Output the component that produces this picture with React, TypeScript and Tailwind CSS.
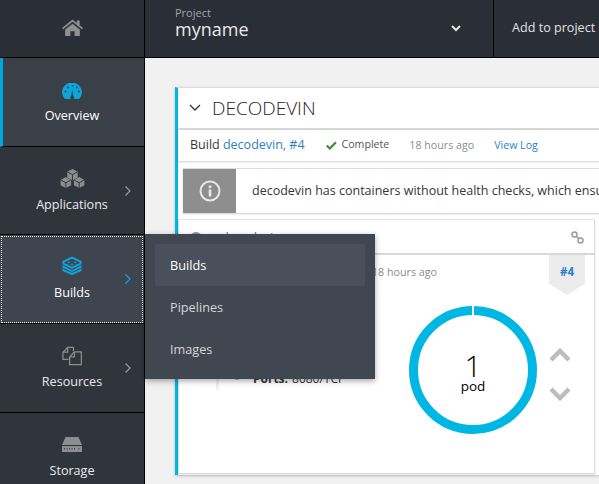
import React from "react";

const Chev = ({ blue }: { blue?: boolean }) => (
  <svg width="8" height="12" viewBox="0 0 8 12" className="absolute left-[124px] top-1/2 -translate-y-1/2" fill="none" stroke={blue ? "#0ea5dc" : "#9a9da1"} strokeWidth="1.2">
    <path d="M1.5 1.5 6 6l-4.5 4.5" />
  </svg>
);

const HomeIcon = () => (
  <svg width="21" height="17" viewBox="0 0 20 18" preserveAspectRatio="none" fill="#8f8f8f">
    <path d="M10 0.5 0 9.6l1.1 1.2L10 3l8.9 7.8 1.1-1.2-3.2-2.9V1.5h-2.7v2.8zM3 11.2V18h5v-5h4v5h5v-6.8L10 5z" />
  </svg>
);

const GaugeIcon = () => (
  <svg width="20" height="16" viewBox="0 0 20 16">
    <path d="M3 16A10 10 0 0 1 0 9.5 10 10 0 0 1 20 9.5 10 10 0 0 1 17 16z" fill="#0ea5dc" />
    <g fill="#343a42">
      <circle cx="3.500" cy="8.500" r="0.900" />
      <circle cx="6" cy="4.500" r="0.900" />
      <circle cx="10.500" cy="3" r="0.900" />
      <circle cx="14.800" cy="4.600" r="0.900" />
      <circle cx="16.800" cy="8.500" r="0.900" />
      <path d="M9.200 13.200 10.200 6.500 11.200 13.200A1.500 1.500 0 0 1 11.200 16H9.200A1.500 1.500 0 0 1 9.200 13.200z" />
    </g>
  </svg>
);

const CubesIcon = () => (
  <svg width="25" height="20" viewBox="0 0 26 21">
    <g fill="#8b8d8f">
      <path d="M7.5 4 13 1l5.5 3v6L13 13 7.5 10z" />
      <path d="M0.5 12.5 6 9.500l5.500 3v5.500L6 21l-5.500-3z" />
      <path d="M14.500 12.500 20 9.500l5.500 3v5.500L20 21l-5.500-3z" />
    </g>
    <g fill="none" stroke="#30353d" strokeWidth="1">
      <path d="M7.500 4 13 7l5.500-3M13 7v6" />
      <path d="M0.500 12.500 6 15.500l5.500-3M6 15.500V21" />
      <path d="M14.500 12.500 20 15.500l5.500-3M20 15.500V21" />
    </g>
  </svg>
);

const BuildsIcon = () => (
  <svg width="20" height="19" viewBox="0 0 21 19">
    <g fill="none" stroke="#0ea5dc" strokeWidth="2">
      <path d="M10.500 1.200 19.500 5.500v2L10.500 11.800 1.500 7.500v-2z" />
      <path d="M1.500 9.500v1.500l9 4.300 9-4.300V9.500" />
      <path d="M1.500 13v1.500l9 3.800 9-3.800V13" />
    </g>
    <g fill="#0ea5dc">
      <circle cx="7" cy="6" r="1" />
      <circle cx="14" cy="6" r="1" />
      <path d="M9 7.600h3v1.100H9z" />
    </g>
  </svg>
);

const ResourcesIcon = () => (
  <svg width="20" height="20" viewBox="0 0 21 20" fill="none" stroke="#8b8d8f" strokeWidth="1.300">
    <path d="M7 13.500H1V6L6 1h6v4" />
    <path d="M6 1v5H1" />
    <path d="M8 11 13 5.700h7.300V19H8z" />
    <path d="M13 5.700V11H8" />
  </svg>
);

const StorageIcon = () => (
  <svg width="20" height="15" viewBox="0 0 20 14" preserveAspectRatio="none">
    <path d="M3.500 0h13L20 7.500H0z" fill="#8b8d8f" />
    <rect x="0" y="8.300" width="20" height="5.700" fill="#8b8d8f" rx="0.500" />
    <g fill="#30353d">
      <rect x="2" y="10.500" width="1" height="1" />
      <rect x="4.500" y="10.500" width="1" height="1" />
      <rect x="7" y="10.500" width="1" height="1" />
      <rect x="9.500" y="10.500" width="1" height="1" />
      <rect x="12" y="10.500" width="1" height="1" />
      <rect x="16.500" y="10.500" width="1" height="1" />
    </g>
  </svg>
);

const LinkIcon = () => (
  <svg width="13" height="13" viewBox="0 0 13 13" fill="none" stroke="#9a9a9a" strokeWidth="1.500">
    <circle cx="3.500" cy="3.500" r="2.500" />
    <circle cx="9.500" cy="9.500" r="2.500" />
    <path d="M5.500 5.500l2 2" />
  </svg>
);

function NavRow({
  h,
  iconBox,
  icon,
  label,
  chevron,
}: {
  h: string;
  iconBox: string;
  icon: React.ReactNode;
  label: string;
  chevron?: boolean;
}) {
  return (
    <div className={`relative w-full shrink-0 flex flex-col items-center border-b border-black ${h}`}>
      <div className={`flex items-end justify-center ${iconBox}`}>{icon}</div>
      <div className="pt-[1px] text-[12.600px] leading-[18px] text-[#e8e9ea]">{label}</div>
      {chevron && <Chev />}
    </div>
  );
}

export default function App() {
  return (
    <div className="flex h-[484px] w-[599px] overflow-hidden bg-[#f1f1f1] font-['Open_Sans',sans-serif]">
      <aside className="flex w-[145px] shrink-0 flex-col border-r border-black bg-[#30353d]">
        <div className="flex h-[58px] shrink-0 items-center justify-center border-b border-black bg-[#2a2e36] pb-[2px]">
          <HomeIcon />
        </div>
        <div className="h-[89px] shrink-0 border-b border-black border-l-[3px] border-l-[#00a8e1] bg-[#394048]">
          <div className="-ml-[3px] flex flex-col items-center">
            <div className="flex h-[41px] items-end justify-center">
              <GaugeIcon />
            </div>
            <div className="mt-[8px] text-[12.600px] leading-[18px] text-white">Overview</div>
          </div>
        </div>
        <NavRow h="h-[88px]" iconBox="h-[41px] mb-[7px]" icon={<CubesIcon />} label="Applications" chevron />
        <div className="relative h-[89px] w-full shrink-0 border-b border-black bg-[#3f454e] outline-1 -outline-offset-2 outline-dotted outline-white">
          <div className="flex flex-col items-center">
            <div className="flex h-[40px] items-end justify-center">
              <BuildsIcon />
            </div>
            <div className="mt-[9px] text-[12.600px] leading-[18px] text-white">Builds</div>
          </div>
          <Chev blue />
        </div>
        <NavRow h="h-[89px]" iconBox="h-[42px] mb-[6px]" icon={<ResourcesIcon />} label="Resources" chevron />
        <NavRow h="h-[71px] border-b-0" iconBox="h-[39px] mb-[9px]" icon={<StorageIcon />} label="Storage" />
      </aside>

      <div className="relative flex min-w-0 flex-1 flex-col">
        <header className="flex h-[58px] shrink-0 items-stretch border-b border-black bg-[#2a2e36]">
          <div className="flex w-[349px] items-start justify-between border-r border-black pl-[30px] pr-[32px]">
            <div className="flex flex-col pt-[7px]">
              <span className="text-[11px] leading-[12px] text-[#a3a5a8]">Project</span>
              <span className="text-[18px] leading-[20px] text-[#e8e9ea]">myname</span>
            </div>
            <svg className="mt-[25px]" width="10" height="7" viewBox="0 0 10 7" fill="none" stroke="#e8e9ea" strokeWidth="2">
              <path d="M1 1l4 4 4-4" />
            </svg>
          </div>
          <div className="flex flex-1 items-center whitespace-nowrap pl-[18px] text-[12.600px] text-[#e0e1e2]">Add to project</div>
        </header>

        <main className="min-h-0 flex-1 overflow-hidden pl-[30px] pt-[29px]">
          <section className="h-[388px] w-[500px] border-l-[3px] border-l-[#00b7e4] border-t border-t-[#dcdcdc] bg-white shadow-[0_1px_3px_rgba(0,0,0,0.2)]">
            <div className="flex h-[42px] items-center border-b-2 border-b-[#d8d8d8] pl-[11px]">
              <svg width="12" height="8" viewBox="0 0 12 8" fill="none" stroke="#333" strokeWidth="1.300">
                <path d="M1 1l5 5 5-5" />
              </svg>
              <span className="ml-[11px] whitespace-nowrap text-[19px] font-light text-[#1f2327]">DECODEVIN</span>
            </div>
            <div className="flex h-[31px] items-center whitespace-nowrap pl-[12px] shadow-[0_1px_2px_rgba(0,0,0,0.2)]">
              <span className="text-[12.500px] text-[#363636]">
                Build <span className="text-[#2c7fc9]">decodevin, #4</span>
              </span>
              <svg className="ml-[21px]" width="11" height="9" viewBox="0 0 11 9" fill="none" stroke="#3f8a3d" strokeWidth="2.200">
                <path d="M0.800 4.500l3 3L10 1.200" />
              </svg>
              <span className="ml-[5px] -translate-y-[1px] text-[10.600px] text-[#555]">Complete</span>
              <span className="ml-[20px] text-[10.700px] text-[#8b8d8f]">18 hours ago</span>
              <span className="ml-[20px] text-[10.600px] text-[#2c7fc9]">View Log</span>
            </div>
            <div className="mt-[7px] ml-[5px] flex h-[45px] border-t border-t-[#dcdcdc] shadow-[0_1px_2px_rgba(0,0,0,0.2)]">
              <div className="flex w-[53px] shrink-0 items-center justify-center bg-[#8e8e8e]">
                <svg width="22" height="22" viewBox="0 0 22 22">
                  <circle cx="11" cy="11" r="9.500" fill="none" stroke="#e8e8e8" strokeWidth="2" />
                  <rect x="9.700" y="5.500" width="2.600" height="2.600" fill="#e8e8e8" />
                  <rect x="9.700" y="9.500" width="2.600" height="7" fill="#e8e8e8" />
                </svg>
              </div>
              <div className="flex flex-1 items-center whitespace-nowrap pl-[16px] text-[12.500px] text-[#363636]">
                decodevin has containers without health checks, which ensure your application is running correctly.
              </div>
            </div>
            <div className="mt-[6px] h-[255px] w-[417px] border border-[#dcdcdc] border-t-[#e4e4e4] bg-white shadow-[0_1px_2px_rgba(0,0,0,0.12)]">
              <div className="flex h-[35px] items-start justify-between border-b-2 border-b-[#d8d8d8] pl-[11px] pr-[10px]">
                <div className="flex items-center pt-[9px]">
                  <span className="h-[12px] w-[12px] rounded-full bg-[#8e8e8e]" />
                  <span className="ml-[19px] text-[12.500px] text-[#2c7fc9]">decodevin</span>
                </div>
                <div className="pt-[11px]">
                  <LinkIcon />
                </div>
              </div>
              <div className="relative flex">
                <div className="ml-[37px] mt-[10px] h-[125px] w-[3px] bg-[#f0f0f0]" />
                <div className="ml-[34px] flex-1">
                  <div className="mt-[9px] pl-[119px] text-[10.700px] text-[#8b8d8f]">18 hours ago</div>
                  <div className="relative mt-[90px] flex items-center text-[12px] text-[#363636]">
                    <span className="absolute -left-[18px] top-[9px] h-px w-[4px] bg-[#bbb]" />
                    <b className="font-bold">Ports:</b>
                    <span className="ml-[4px]">8080/TCP</span>
                  </div>
                </div>
                <div className="absolute right-[9px] top-0 flex h-[40px] w-[36px] items-start justify-center bg-[#ececec] pt-[8px] text-[11.500px] font-bold text-[#2c7fc9] [clip-path:polygon(0_0,100%_0,100%_72%,50%_100%,0_72%)]">
                  #4
                </div>
                <div className="absolute left-[230px] top-[51px]">
                  <svg width="128" height="128" viewBox="0 0 128 128">
                    <circle cx="64" cy="64" r="59.500" fill="none" stroke="#00b7e4" strokeWidth="9" />
                    <rect x="63" y="0" width="2" height="10" fill="#fff" />
                    <text x="64" y="71" textAnchor="middle" fontSize="30" fontWeight="300" fill="#000">1</text>
                    <text x="64" y="85" textAnchor="middle" fontSize="13.500" fill="#000">pod</text>
                  </svg>
                </div>
                <div className="absolute left-[370px] top-[92px] flex flex-col gap-[25px]">
                  <svg width="22" height="15" viewBox="0 0 22 15" fill="none" stroke="#bdbdbd" strokeWidth="4.500">
                    <path d="M2 13l9-9 9 9" />
                  </svg>
                  <svg width="22" height="15" viewBox="0 0 22 15" fill="none" stroke="#bdbdbd" strokeWidth="4.500">
                    <path d="M2 2l9 9 9-9" />
                  </svg>
                </div>
              </div>
            </div>
          </section>
        </main>

        <div className="absolute left-0 top-[234px] h-[145px] w-[230px] bg-[#414750] pl-[10px] pr-[10px] pt-[10px] shadow-[0_2px_6px_rgba(0,0,0,0.35)]">
          <div className="flex h-[42px] items-center bg-[#4a505b] pl-[15px] pt-[2px] text-[12.700px] text-white">Builds</div>
          <div className="flex h-[42px] items-center pl-[15px] pt-[2px] text-[12.700px] text-[#d4d5d7]">Pipelines</div>
          <div className="flex h-[42px] items-center pl-[15px] pt-[2px] text-[12.700px] text-[#d4d5d7]">Images</div>
        </div>
      </div>
    </div>
  );
}
